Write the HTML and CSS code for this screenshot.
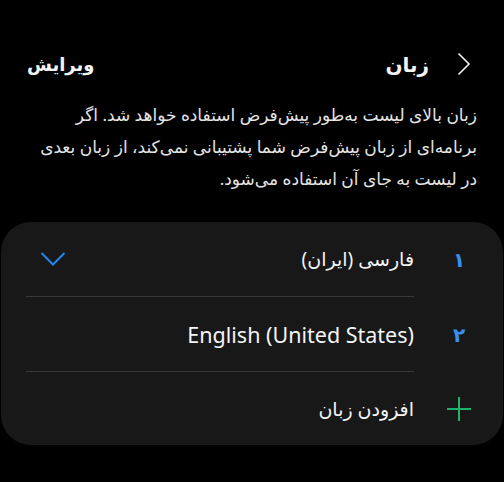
FILE: index.html
```html
<!DOCTYPE html>
<html lang="fa" dir="rtl">
  <head>
    <meta charset="UTF-8">
    <title>زبان</title>
    <link rel="stylesheet" href="styles.css">
  </head>
  <body>

    <header class="topbar">
      <a href="#back" class="back">
        <svg width="14" height="24" viewBox="0 0 14 24">
          <path d="M1.5 1.5 L12 12 L1.5 22.5" fill="none" stroke="#f2f2f2" stroke-width="1.6"/>
        </svg>
      </a>
      <h1>زبان</h1>
      <a href="#edit" class="edit">ویرایش</a>
    </header>

    <p class="hint">زبان بالای لیست به‌طور پیش‌فرض استفاده خواهد شد. اگر برنامه‌ای از زبان پیش‌فرض شما پشتیبانی نمی‌کند، از زبان بعدی در لیست به جای آن استفاده می‌شود.</p>

    <ul class="languages">
      <li class="lang">
        <span class="lead num">۱</span>
        <div class="body">
          <span class="name">فارسی (ایران)</span>
          <svg class="check" width="26" height="16" viewBox="0 0 26 16">
            <path d="M1.5 2 L13 13.5 L24.5 2" fill="none" stroke="#2286f2" stroke-width="2"/>
          </svg>
        </div>
      </li>
      <li class="lang">
        <span class="lead num">۲</span>
        <div class="body">
          <span class="name latin" dir="ltr">English (United States)</span>
        </div>
      </li>
      <li class="lang add">
        <span class="lead">
          <svg width="24" height="24" viewBox="0 0 24 24">
            <path d="M12 0 V24 M0 12 H24" stroke="#20b26c" stroke-width="2"/>
          </svg>
        </span>
        <div class="body">
          <span class="name">افزودن زبان</span>
        </div>
      </li>
    </ul>

  </body>
</html>
```

FILE: styles.css
```css
html, body {
  height: 100%;
}

body {
  background: #000;
  color: #f4f4f4;
  font-family: "Noto Sans", "DejaVu Sans", sans-serif;
  margin: 0;
  -webkit-font-smoothing: antialiased;
}

a {
  color: inherit;
  text-decoration: none;
}

.topbar {
  display: flex;
  align-items: center;
  height: 28px;
  padding: 50px 33px 0 27px;
}

.back {
  display: flex;
  margin-left: 28px;
}

.topbar h1 {
  flex: 1;
  font-size: 20px;
  font-weight: bold;
  margin: 0;
}

.edit {
  font-size: 18px;
  font-weight: bold;
}

.hint {
  color: #e4e4e4;
  font-size: 17px;
  line-height: 32px;
  margin: 21px 27px 0 27px;
}

.languages {
  background: #181818;
  border-radius: 30px;
  list-style: none;
  margin: 27px 1px 0 1px;
  padding: 0 20px 0 25px;
}

.lang {
  display: flex;
  height: 75px;
}

.lead {
  display: flex;
  align-items: center;
  justify-content: center;
  width: 48px;
}

.num {
  color: #3a8ff0;
  font-size: 20px;
  font-weight: bold;
}

.body {
  flex: 1;
  display: flex;
  align-items: center;
  justify-content: space-between;
  margin-right: 21px;
  border-bottom: 1px solid #3a3a3a;
}

.lang:last-child .body {
  border-bottom: none;
}

.lang.add {
  height: 73px;
}

.name {
  font-size: 19px;
}

.name.latin {
  font-size: 21.5px;
}

.check {
  margin-left: 14px;
}
```
